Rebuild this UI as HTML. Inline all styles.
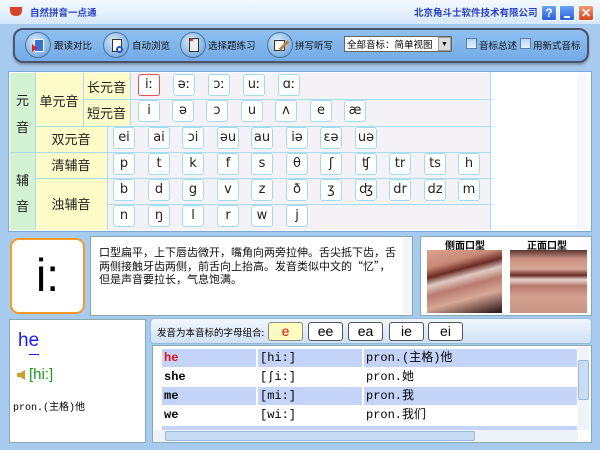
<!DOCTYPE html>
<html><head><meta charset="utf-8">
<style>
*{margin:0;padding:0;box-sizing:border-box}
body{width:600px;height:450px;overflow:hidden;background:#a6cbef;font-family:"Liberation Sans","Noto Sans CJK SC",sans-serif;font-size:12px;position:relative}
.a{position:absolute}
.k{position:absolute;width:22px;height:22px;background:#fff;border:1px solid #9fdcf0;border-radius:3px;text-align:center;line-height:20px;font-size:13px;font-family:"DejaVu Sans",sans-serif;color:#222}
.cn{font-family:"Noto Sans CJK SC",sans-serif}
.tb{position:absolute;top:33px;height:24px;line-height:24px;font-size:9.5px;color:#111;white-space:nowrap}
.ic{position:absolute;top:32px;width:26px;height:26px;border-radius:50%;background:radial-gradient(circle at 40% 35%,#d8ebfb,#7fb1e2 70%,#4f86c0);border:1px solid #4a73a6}
.lb{position:absolute;font-size:12px;color:#222;text-align:center}
.cb{position:absolute;top:322px;height:19px;border:1px solid #555;border-radius:3px;background:#fff;text-align:center;line-height:17px;font-size:14px}
.row{position:absolute;left:160px;width:417px;height:18px;font-family:"Liberation Mono","Noto Sans CJK SC",monospace;font-size:12px;line-height:18px}
.row span{position:absolute;top:0;height:18px;padding-left:2px}
</style></head><body>
<div class="a" style="left:0;top:0;width:600px;height:24px;background:linear-gradient(#f4f9ff,#d6e8fa)"></div>
<div class="a" style="left:10px;top:7px;width:12px;height:9px;background:#d8402a;border-radius:0 0 5px 5px"></div>
<div class="a cn" style="left:30px;top:5px;font-size:9.5px;color:#2a3fc0;font-weight:bold;white-space:nowrap">自然拼音一点通</div>
<div class="a cn" style="left:414px;top:5px;font-size:9.5px;color:#2a3fc0;font-weight:bold;white-space:nowrap">北京角斗士软件技术有限公司</div>
<div class="a" style="left:541px;top:5px;width:16px;height:16px;background:linear-gradient(#6aa2ff,#2b5fd6);border:1px solid #fff;border-radius:2px;color:#fff;font-weight:bold;text-align:center;line-height:14px;font-size:12px">?</div>
<div class="a" style="left:559px;top:5px;width:16px;height:16px;background:linear-gradient(#6aa2ff,#2b5fd6);border:1px solid #fff;border-radius:2px"><div class="a" style="left:4px;top:10px;width:6px;height:2px;background:#fff"></div></div>
<div class="a" style="left:578px;top:5px;width:16px;height:16px;background:linear-gradient(#f59a70,#d6441e);border:1px solid #fff;border-radius:2px;color:#fff;font-weight:bold;text-align:center;line-height:14px;font-size:12px">✕</div>
<div class="a" style="left:13px;top:28px;width:576px;height:35px;background:linear-gradient(#8ec0f0,#74abe6);border:2px solid #46546c;border-radius:10px;box-shadow:0 2px 2px #8090a8"></div>
<div class="ic" style="left:25px"><div class="a" style="left:8px;top:6px;width:10px;height:13px;background:#3b6fd0;border:1px solid #fff"></div><div class="a" style="left:6px;top:11px;width:0;height:0;border-left:5px solid #e02020;border-top:4px solid transparent;border-bottom:4px solid transparent"></div></div>
<div class="tb cn" style="left:54px">跟读对比</div>
<div class="ic" style="left:103px"><div class="a" style="left:8px;top:6px;width:10px;height:13px;background:#fff;border:1px solid #333"></div><div class="a" style="left:12px;top:13px;width:7px;height:7px;border:2px solid #2050c0;border-radius:50%"></div></div>
<div class="tb cn" style="left:132px">自动浏览</div>
<div class="ic" style="left:180px"><div class="a" style="left:8px;top:5px;width:10px;height:14px;background:#eee;border:1px solid #333"></div><div class="a" style="left:9px;top:5px;width:3px;height:3px;background:#d03030"></div></div>
<div class="tb cn" style="left:208px">选择题练习</div>
<div class="ic" style="left:267px"><div class="a" style="left:6px;top:7px;width:11px;height:11px;background:#fff;border:1px solid #333"></div><div class="a" style="left:10px;top:11px;width:12px;height:3px;background:#c08040;transform:rotate(-45deg)"></div></div>
<div class="tb cn" style="left:295px">拼写听写</div>
<div class="a cn" style="left:344px;top:36px;width:108px;height:16px;background:#fff;border:1px solid #666;font-size:9.5px;line-height:14px;padding-left:2px;white-space:nowrap;overflow:hidden">全部音标：简单视图</div>
<div class="a" style="left:438px;top:37px;width:13px;height:14px;background:#ddd;border:1px solid #999;font-size:7px;text-align:center;line-height:14px">▼</div>
<div class="a" style="left:466px;top:38px;width:11px;height:11px;background:linear-gradient(#b8d4f4,#e8f2ff);border:1px solid #5a7fb4"></div>
<div class="tb cn" style="left:479px">音标总述</div>
<div class="a" style="left:520px;top:38px;width:11px;height:11px;background:linear-gradient(#b8d4f4,#e8f2ff);border:1px solid #5a7fb4"></div>
<div class="tb cn" style="left:533px">用新式音标</div>
<div class="a" style="left:8px;top:71px;width:584px;height:161px;background:#fff;border:1px solid #7aa8d8"></div>
<div class="a" style="left:10px;top:73px;width:480px;height:157px;background:#f4f2f6"></div>
<div class="a" style="left:10px;top:73px;width:25px;height:157px;background:#d2f2d2"></div>
<div class="a" style="left:35px;top:73px;width:95px;height:53px;background:#fdfcc8"></div>
<div class="a" style="left:35px;top:126px;width:72px;height:104px;background:#fdfcc8"></div>
<div class="a" style="left:10px;top:152px;width:480px;height:1px;background:#a8ddf0"></div>
<div class="a" style="left:35px;top:126px;width:455px;height:1px;background:#a8ddf0"></div>
<div class="a" style="left:83px;top:99px;width:407px;height:1px;background:#a8ddf0"></div>
<div class="a" style="left:35px;top:178px;width:455px;height:1px;background:#a8ddf0"></div>
<div class="a" style="left:107px;top:204px;width:383px;height:1px;background:#a8ddf0"></div>
<div class="a" style="left:35px;top:73px;width:1px;height:157px;background:#a8ddf0"></div>
<div class="a" style="left:83px;top:73px;width:1px;height:53px;background:#a8ddf0"></div>
<div class="a" style="left:130px;top:73px;width:1px;height:53px;background:#a8ddf0"></div>
<div class="a" style="left:107px;top:126px;width:1px;height:104px;background:#a8ddf0"></div>
<div class="a" style="left:490px;top:73px;width:1px;height:157px;background:#a8ddf0"></div>
<div class="lb cn" style="left:10px;top:90px;width:25px;font-size:13px">元</div>
<div class="lb cn" style="left:10px;top:117px;width:25px;font-size:13px">音</div>
<div class="lb cn" style="left:10px;top:170px;width:25px;font-size:13px">辅</div>
<div class="lb cn" style="left:10px;top:196px;width:25px;font-size:13px">音</div>
<div class="lb cn" style="left:35px;top:91px;width:48px;font-size:13px">单元音</div>
<div class="lb cn" style="left:83px;top:77px;width:47px;font-size:13px">长元音</div>
<div class="lb cn" style="left:83px;top:103px;width:47px;font-size:13px">短元音</div>
<div class="lb cn" style="left:35px;top:129px;width:72px;font-size:13px">双元音</div>
<div class="lb cn" style="left:35px;top:155px;width:72px;font-size:13px">清辅音</div>
<div class="lb cn" style="left:35px;top:194px;width:72px;font-size:13px">浊辅音</div>
<div class="k" style="left:138px;top:74px;border-color:#e05050">iː</div><div class="k" style="left:173px;top:74px">əː</div><div class="k" style="left:208px;top:74px">ɔː</div><div class="k" style="left:243px;top:74px">uː</div><div class="k" style="left:278px;top:74px">ɑː</div>
<div class="k" style="left:138px;top:100px">i</div><div class="k" style="left:172px;top:100px">ə</div><div class="k" style="left:206px;top:100px">ɔ</div><div class="k" style="left:241px;top:100px">u</div><div class="k" style="left:275px;top:100px">ʌ</div><div class="k" style="left:310px;top:100px">e</div><div class="k" style="left:344px;top:100px">æ</div>
<div class="k" style="left:113px;top:127px">ei</div><div class="k" style="left:148px;top:127px">ai</div><div class="k" style="left:182px;top:127px">ɔi</div><div class="k" style="left:217px;top:127px">əu</div><div class="k" style="left:251px;top:127px">au</div><div class="k" style="left:286px;top:127px">iə</div><div class="k" style="left:320px;top:127px">εə</div><div class="k" style="left:355px;top:127px">uə</div>
<div class="k" style="left:113px;top:153px">p</div><div class="k" style="left:148px;top:153px">t</div><div class="k" style="left:182px;top:153px">k</div><div class="k" style="left:217px;top:153px">f</div><div class="k" style="left:251px;top:153px">s</div><div class="k" style="left:286px;top:153px">θ</div><div class="k" style="left:320px;top:153px">ʃ</div><div class="k" style="left:355px;top:153px">ʧ</div><div class="k" style="left:389px;top:153px">tr</div><div class="k" style="left:424px;top:153px">ts</div><div class="k" style="left:458px;top:153px">h</div>
<div class="k" style="left:113px;top:179px">b</div><div class="k" style="left:148px;top:179px">d</div><div class="k" style="left:182px;top:179px">g</div><div class="k" style="left:217px;top:179px">v</div><div class="k" style="left:251px;top:179px">z</div><div class="k" style="left:286px;top:179px">ð</div><div class="k" style="left:320px;top:179px">ʒ</div><div class="k" style="left:355px;top:179px">ʤ</div><div class="k" style="left:389px;top:179px">dr</div><div class="k" style="left:424px;top:179px">dz</div><div class="k" style="left:458px;top:179px">m</div>
<div class="k" style="left:113px;top:205px">n</div><div class="k" style="left:148px;top:205px">ŋ</div><div class="k" style="left:182px;top:205px">l</div><div class="k" style="left:217px;top:205px">r</div><div class="k" style="left:251px;top:205px">w</div><div class="k" style="left:286px;top:205px">j</div>
<div class="a" style="left:577px;top:74px;width:10px;height:155px;background:#f6f8fb"></div>
<div class="a" style="left:10px;top:238px;width:75px;height:76px;background:#fff;border:2px solid #f39a2a;border-radius:9px;text-align:center;font-size:46px;line-height:70px;font-family:'Liberation Sans',sans-serif">i:</div>
<div class="a" style="left:90px;top:236px;width:323px;height:80px;background:#fff;border:1px solid #8aa;"></div>
<div class="a" style="left:403px;top:238px;width:9px;height:76px;background:#f3f5f8"></div>
<div class="a cn" style="left:99px;top:246px;width:300px;font-size:11px;line-height:13.5px;color:#111">口型扁平，上下唇齿微开，嘴角向两旁拉伸。舌尖抵下齿，舌两侧接触牙齿两侧，前舌向上抬高。发音类似中文的“忆”，但是声音要拉长，气息饱满。</div>
<div class="a" style="left:420px;top:236px;width:172px;height:80px;background:#fff;border:1px solid #8aa"></div>
<div class="a cn" style="left:445px;top:237px;font-size:10px;font-weight:bold">侧面口型</div>
<div class="a cn" style="left:527px;top:237px;font-size:10px;font-weight:bold">正面口型</div>
<div class="a" style="left:427px;top:250px;width:75px;height:63px;background:linear-gradient(165deg,#d9a48e 0%,#c88878 22%,#6a2a24 34%,#e0ccc4 44%,#b87a6e 56%,#d8a898 72%,#3a2220 96%)"></div>
<div class="a" style="left:510px;top:250px;width:77px;height:63px;background:linear-gradient(180deg,#5a3430 0%,#c89080 14%,#d8a898 30%,#6a2a24 40%,#e8d4cc 47%,#b87a6e 57%,#d4a090 74%,#c89484 100%)"></div>
<div class="a" style="left:9px;top:319px;width:137px;height:124px;background:#fff;border:1px solid #8aa"></div>
<div class="a" style="left:18px;top:330px;font-size:19px;color:#1a1aff">he</div>
<div class="a" style="left:29px;top:354px;width:10px;height:1px;background:#1a1aff"></div>
<div class="a" style="left:17px;top:370px;width:8px;height:10px;background:#c8a030;clip-path:polygon(0 30%,40% 30%,100% 0,100% 100%,40% 70%,0 70%)"></div>
<div class="a" style="left:29px;top:366px;font-size:15px;color:#1a9a1a">[hi:]</div>
<div class="a cn" style="left:13px;top:398px;font-size:10px;font-family:'Liberation Mono','Noto Sans CJK SC',monospace">pron.(主格)他</div>
<div class="a" style="left:150px;top:318px;width:442px;height:26px;background:linear-gradient(#f0f6fd,#cfe2f6);border:1px solid #98b8da;border-radius:4px"></div>
<div class="a cn" style="left:157px;top:325px;font-size:9.5px;white-space:nowrap">发音为本音标的字母组合:</div>
<div class="cb" style="left:268px;width:35px;background:#fffcc0;color:#e01010;border-color:#888">e</div>
<div class="cb" style="left:308px;width:35px">ee</div>
<div class="cb" style="left:348px;width:35px">ea</div>
<div class="cb" style="left:389px;width:35px">ie</div>
<div class="cb" style="left:428px;width:35px">ei</div>
<div class="a" style="left:152px;top:345px;width:440px;height:98px;background:#fff;border:1px solid #8aa"></div>
<div class="row" style="top:349px"><span style="left:2px;width:94px;background:#c4d4f8;color:#e01010;font-weight:bold">he</span><span style="left:98px;width:104px;background:#c4d4f8">[hi:]</span><span style="left:204px;width:213px;background:#c4d4f8">pron.(主格)他</span></div>
<div class="row" style="top:368px"><span style="left:2px;font-weight:bold">she</span><span style="left:98px">[ʃi:]</span><span style="left:204px">pron.她</span></div>
<div class="row" style="top:387px"><span style="left:2px;width:94px;background:#c4d4f8;font-weight:bold">me</span><span style="left:98px;width:104px;background:#c4d4f8">[mi:]</span><span style="left:204px;width:213px;background:#c4d4f8">pron.我</span></div>
<div class="row" style="top:406px"><span style="left:2px;font-weight:bold">we</span><span style="left:98px">[wi:]</span><span style="left:204px">pron.我们</span></div>
<div class="a" style="left:162px;top:426px;width:415px;height:4px;background:#c4d4f8"></div>
<div class="a" style="left:578px;top:347px;width:11px;height:83px;background:#eef3fa"></div>
<div class="a" style="left:578px;top:360px;width:11px;height:40px;background:#c8dcf4;border:1px solid #9ab8de;border-radius:2px"></div>
<div class="a" style="left:153px;top:430px;width:425px;height:12px;background:#eef3fa"></div>
<div class="a" style="left:165px;top:431px;width:310px;height:10px;background:#c8dcf4;border:1px solid #9ab8de;border-radius:2px"></div>
</body></html>
